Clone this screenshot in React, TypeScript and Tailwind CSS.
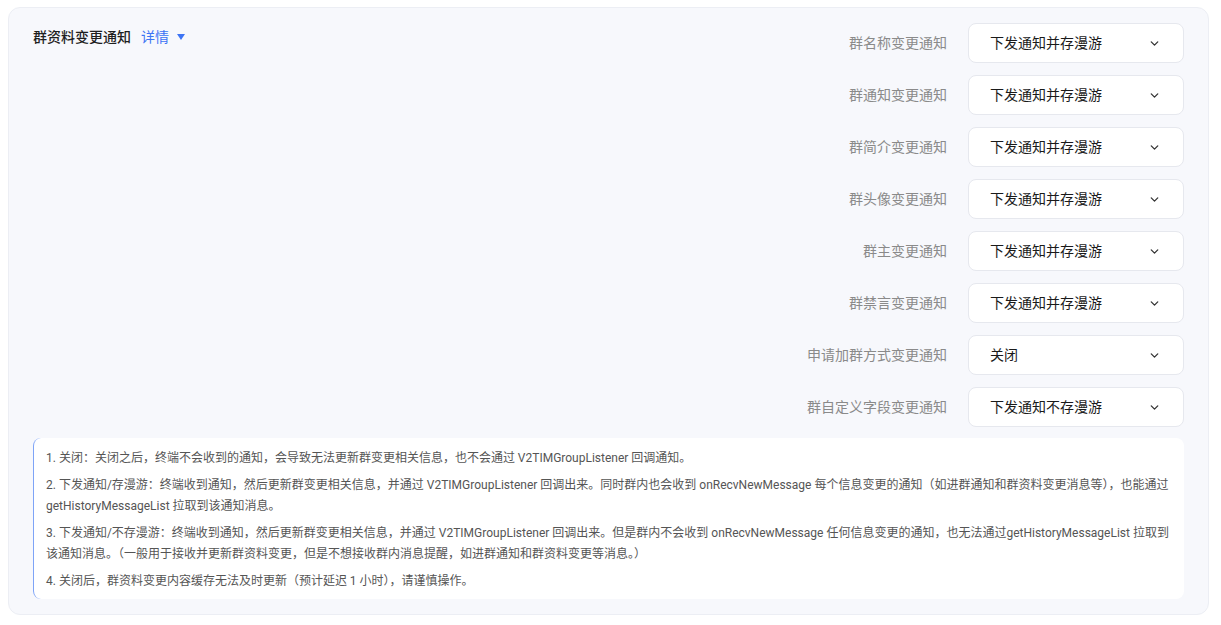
const rows = [
  { label: "群名称变更通知", value: "下发通知并存漫游" },
  { label: "群通知变更通知", value: "下发通知并存漫游" },
  { label: "群简介变更通知", value: "下发通知并存漫游" },
  { label: "群头像变更通知", value: "下发通知并存漫游" },
  { label: "群主变更通知", value: "下发通知并存漫游" },
  { label: "群禁言变更通知", value: "下发通知并存漫游" },
  { label: "申请加群方式变更通知", value: "关闭" },
  { label: "群自定义字段变更通知", value: "下发通知不存漫游" },
];

const notes = [
  "1. 关闭：关闭之后，终端不会收到的通知，会导致无法更新群变更相关信息，也不会通过 V2TIMGroupListener 回调通知。",
  "2. 下发通知/存漫游：终端收到通知，然后更新群变更相关信息，并通过 V2TIMGroupListener 回调出来。同时群内也会收到 onRecvNewMessage 每个信息变更的通知（如进群通知和群资料变更消息等），也能通过 getHistoryMessageList 拉取到该通知消息。",
  "3. 下发通知/不存漫游：终端收到通知，然后更新群变更相关信息，并通过 V2TIMGroupListener 回调出来。但是群内不会收到 onRecvNewMessage 任何信息变更的通知，也无法通过getHistoryMessageList 拉取到该通知消息。（一般用于接收并更新群资料变更，但是不想接收群内消息提醒，如进群通知和群资料变更等消息。）",
  "4. 关闭后，群资料变更内容缓存无法及时更新（预计延迟 1 小时），请谨慎操作。",
];

const Chevron = () => (
  <svg
    width="13"
    height="13"
    viewBox="0 0 24 24"
    fill="none"
    stroke="currentColor"
    strokeWidth="2.4"
    strokeLinecap="round"
    strokeLinejoin="round"
  >
    <path d="m6 9 6 6 6-6" />
  </svg>
);

const App = () => {
  return (
    <div
      className="min-h-[625px] bg-white pl-2 pr-3 pt-[7px] pb-[10px]"
      style={{ fontFamily: 'Roboto, "Noto Sans CJK SC", sans-serif' }}
    >
      <div className="rounded-xl border border-[#eceef4] bg-[#f7f8fc] px-6 pt-[15px] pb-[15px]">
        {/* Header + selects */}
        <div className="flex justify-between">
          <div className="flex items-center gap-[10px] h-7">
            <span className="text-[14px] font-medium text-[#1f1f1f]">群资料变更通知</span>
            <span className="flex items-center gap-2 text-[14px] text-[#3d74f4]">
              详情
              <svg width="8" height="6" viewBox="0 0 8 6">
                <path d="M0 0h8L4 6z" fill="#3d74f4" />
              </svg>
            </span>
          </div>

          <div className="flex flex-col items-end gap-3">
            {rows.map((row) => (
              <div key={row.label} className="flex items-center gap-[21px]">
                <span className="text-[14px] text-[#8a8a8a]">{row.label}</span>
                <div className="flex h-10 w-[216px] items-center justify-between rounded-lg border border-[#e6e8ee] bg-white pl-[21px] pr-[22px]">
                  <span className="text-[14px] text-[#1a1a1a]">{row.value}</span>
                  <span className="text-[#333]">
                    <Chevron />
                  </span>
                </div>
              </div>
            ))}
          </div>
        </div>

        {/* Notes */}
        <div className="mt-[11px] rounded-lg border-l border-[#7ea4f7] bg-white px-3 pt-[10px] pb-[7px] text-[12px] leading-[21px] text-[#555]">
          {notes.map((n) => (
            <p key={n} className="mb-[6px] last:mb-0">
              {n}
            </p>
          ))}
        </div>
      </div>
    </div>
  );
};

export default App;
